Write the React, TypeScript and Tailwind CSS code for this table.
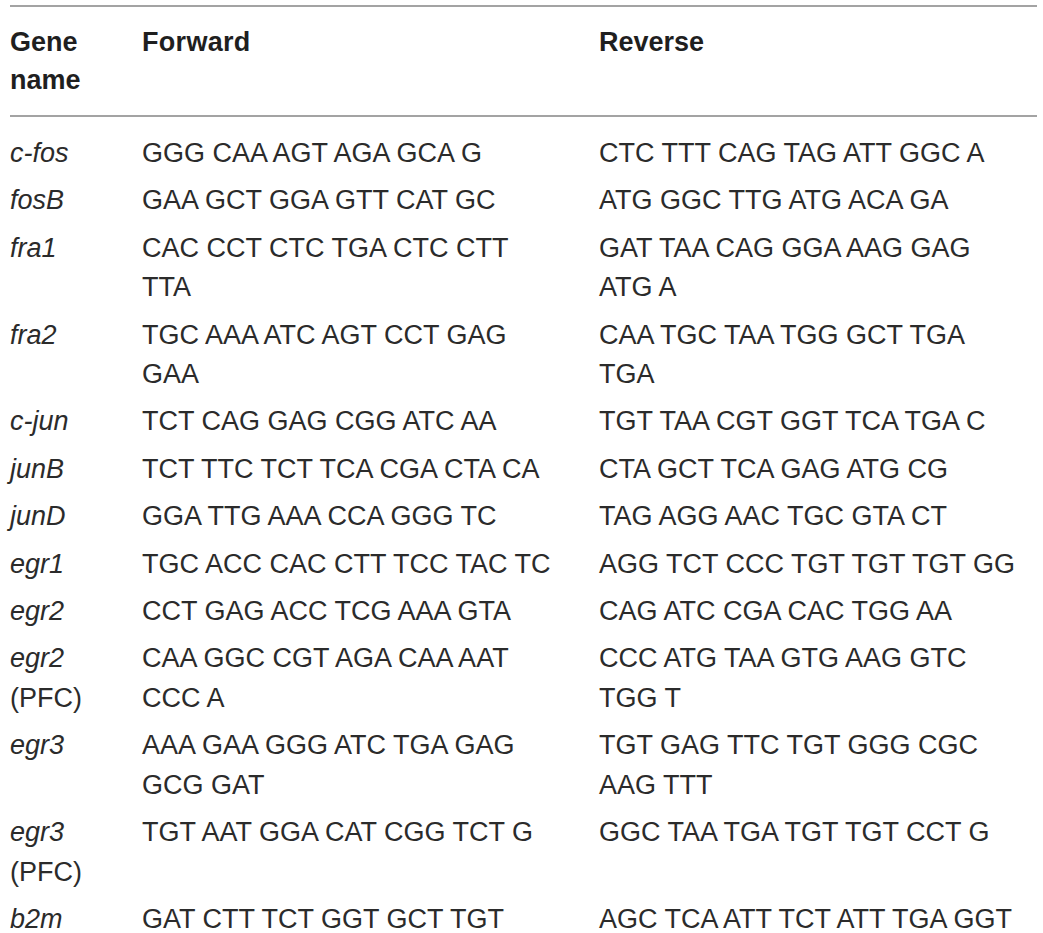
import React from "react";

type Row = { gene: string[]; fwd: string[]; rev: string[] };

const rows: Row[] = [
  { gene: ["c-fos"], fwd: ["GGG CAA AGT AGA GCA G"], rev: ["CTC TTT CAG TAG ATT GGC A"] },
  { gene: ["fosB"], fwd: ["GAA GCT GGA GTT CAT GC"], rev: ["ATG GGC TTG ATG ACA GA"] },
  { gene: ["fra1"], fwd: ["CAC CCT CTC TGA CTC CTT", "TTA"], rev: ["GAT TAA CAG GGA AAG GAG", "ATG A"] },
  { gene: ["fra2"], fwd: ["TGC AAA ATC AGT CCT GAG", "GAA"], rev: ["CAA TGC TAA TGG GCT TGA", "TGA"] },
  { gene: ["c-jun"], fwd: ["TCT CAG GAG CGG ATC AA"], rev: ["TGT TAA CGT GGT TCA TGA C"] },
  { gene: ["junB"], fwd: ["TCT TTC TCT TCA CGA CTA CA"], rev: ["CTA GCT TCA GAG ATG CG"] },
  { gene: ["junD"], fwd: ["GGA TTG AAA CCA GGG TC"], rev: ["TAG AGG AAC TGC GTA CT"] },
  { gene: ["egr1"], fwd: ["TGC ACC CAC CTT TCC TAC TC"], rev: ["AGG TCT CCC TGT TGT TGT GG"] },
  { gene: ["egr2"], fwd: ["CCT GAG ACC TCG AAA GTA"], rev: ["CAG ATC CGA CAC TGG AA"] },
  { gene: ["egr2", "(PFC)"], fwd: ["CAA GGC CGT AGA CAA AAT", "CCC A"], rev: ["CCC ATG TAA GTG AAG GTC", "TGG T"] },
  { gene: ["egr3"], fwd: ["AAA GAA GGG ATC TGA GAG", "GCG GAT"], rev: ["TGT GAG TTC TGT GGG CGC", "AAG TTT"] },
  { gene: ["egr3", "(PFC)"], fwd: ["TGT AAT GGA CAT CGG TCT G"], rev: ["GGC TAA TGA TGT TGT CCT G"] },
  { gene: ["b2m"], fwd: ["GAT CTT TCT GGT GCT TGT"], rev: ["AGC TCA ATT TCT ATT TGA GGT"] },
];

function Lines({ lines, italicFirst }: { lines: string[]; italicFirst?: boolean }) {
  return (
    <div className="flex flex-col">
      {lines.map((l, i) => (
        <span
          key={i}
          className={"whitespace-nowrap " + (italicFirst && i === 0 ? "italic" : "")}
        >
          {l}
        </span>
      ))}
    </div>
  );
}

export default function App() {
  return (
    <div
      className="w-[1043px] h-[933px] overflow-hidden bg-white text-[#2b2b2b]"
      style={{ fontFamily: '"Liberation Sans", Arial, sans-serif' }}
    >
      <div className="ml-[10px] w-[1027px] pt-[5px]">
        <div className="h-[2px] bg-[#a3a3a3]" />
        <div className="grid grid-cols-[132px_457px_1fr] pt-[16px] pb-[16px] text-[27px] leading-[38px] font-bold text-[#1f1f1f]">
          <div>
            Gene
            <br />
            name
          </div>
          <div className="tracking-[0.3px]">Forward</div>
          <div>Reverse</div>
        </div>
        <div className="h-[2px] bg-[#a3a3a3]" />
        <div className="pt-[13px] text-[27px] leading-[39.4px]">
          {rows.map((r, i) => (
            <div key={i} className="grid grid-cols-[132px_457px_1fr] py-[4px]">
              <Lines lines={r.gene} italicFirst />
              <Lines lines={r.fwd} />
              <Lines lines={r.rev} />
            </div>
          ))}
        </div>
      </div>
    </div>
  );
}
